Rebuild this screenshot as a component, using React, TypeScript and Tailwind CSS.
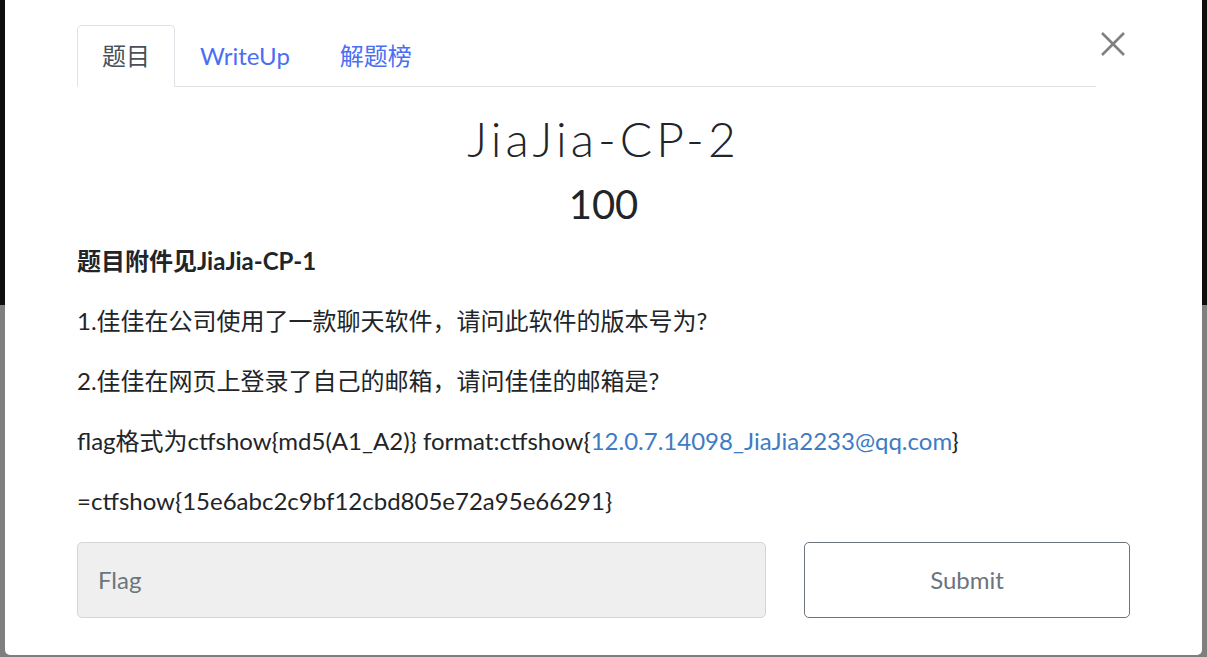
export default function App() {
  const font = { fontFamily: 'Lato, "Noto Sans CJK SC", sans-serif' };
  return (
    <div className="relative h-[657px] w-full overflow-hidden" style={font}>
      <div className="flex h-full flex-col">
        <div className="h-[305px] bg-[#0e0e0e]" />
        <div className="flex-1 bg-[#7f7f7f]" />
      </div>
      <div className="absolute left-[5px] right-[5px] top-0 h-[655px] rounded-b-[5px] bg-white px-[72px] pt-[25px] text-[#212529]">
        <div className="flex items-start">
          <ul className="flex flex-1 border-b border-[#dee2e6] text-[24px]">
            <li className="-mb-px flex h-[62px] items-center rounded-t-[5px] border border-[#dee2e6] border-b-white bg-white px-[24px] text-[#495057]">
              题目
            </li>
            <li className="flex h-[61px] items-center px-[25px] text-[#4a6ef5]">WriteUp</li>
            <li className="flex h-[61px] items-center px-[25px] text-[#4a6ef5]">解题榜</li>
          </ul>
          <button className="flex h-[36px] w-[34px] items-center justify-center pt-[1px]">
            <svg width="26" height="26" viewBox="0 0 26 26">
              <path d="M2 2 L24 24 M24 2 L2 24" stroke="#808080" strokeWidth="2.6" strokeLinecap="butt" />
            </svg>
          </button>
        </div>
        <h1 className="mt-[23px] text-center text-[48px] font-light leading-[58px] tracking-[4px]">JiaJia-CP-2</h1>
        <h2 className="mt-[12px] text-center text-[40px] font-normal leading-[48px]">100</h2>
        <div className="mt-[15px] text-[24px] leading-[36px]">
          <p className="mb-[24px] font-bold">题目附件见JiaJia-CP-1</p>
          <p className="mb-[24px]">1.佳佳在公司使用了一款聊天软件，请问此软件的版本号为?</p>
          <p className="mb-[24px]">2.佳佳在网页上登录了自己的邮箱，请问佳佳的邮箱是?</p>
          <p className="mb-[24px]">
            flag格式为ctfshow{'{'}md5(A1_A2){'}'} format:ctfshow{'{'}
            <span className="text-[#3d7cc4]">12.0.7.14098_JiaJia2233@qq.com</span>
            {'}'}
          </p>
          <p>=ctfshow{'{'}15e6abc2c9bf12cbd805e72a95e66291{'}'}</p>
        </div>
        <div className="mt-[23px] flex justify-between">
          <div className="flex h-[76px] w-[689px] items-center rounded-[5px] border border-[#d4d4d4] bg-[#efefef] px-[20px] text-[24px] text-[#6c757d]">
            Flag
          </div>
          <button className="flex h-[76px] w-[326px] items-center justify-center rounded-[5px] border border-[#6c757d] bg-white text-[24px] text-[#6c757d]">
            Submit
          </button>
        </div>
      </div>
    </div>
  );
}
